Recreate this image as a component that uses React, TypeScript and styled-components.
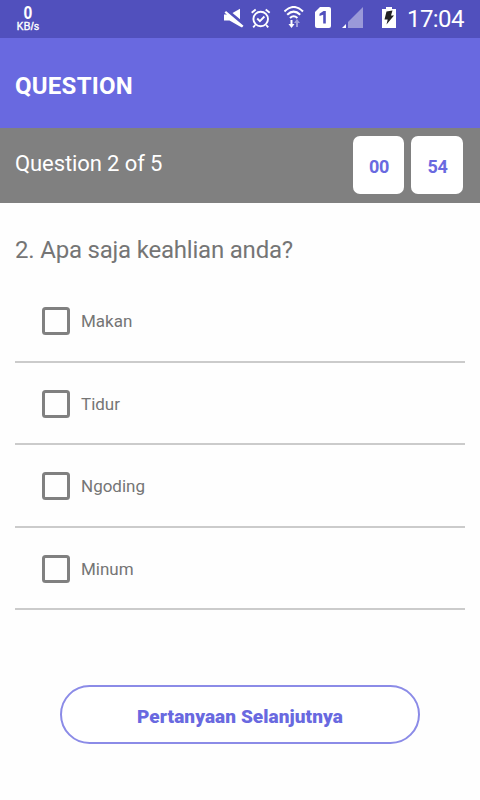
import React from "react";
import styled, { createGlobalStyle } from "styled-components";

const accent = "#6969e0";

const GlobalStyle = createGlobalStyle`
  *, *::before, *::after { box-sizing: border-box; }
  body { margin: 0; background: #fff; font-family: Roboto, sans-serif; }
`;

const Screen = styled.div`
  width: 480px;
  height: 800px;
  display: flex;
  flex-direction: column;
  background: #fefefe;
  overflow: hidden;
`;

const StatusBar = styled.header`
  height: 38px;
  flex: none;
  display: flex;
  align-items: flex-start;
  background: #5150bd;
  color: #fff;
`;

const NetSpeed = styled.div`
  width: 40px;
  margin: 4px auto 0 8px;
  display: flex;
  flex-direction: column;
  align-items: center;
`;

const NetValue = styled.div`
  font: 700 18px/18px "Liberation Sans", sans-serif;
  transform: scaleX(0.88);
`;

const NetUnit = styled.div`
  font: 400 10px/9px "Liberation Sans", sans-serif;
  letter-spacing: 0.4px;
  -webkit-text-stroke: 0.4px #fff;
`;

const StatusIcon = styled.svg<{ $gap: number }>`
  flex: none;
  margin: 6px ${(p) => p.$gap}px 0 0;
  fill: #fff;
`;

const Clock = styled.time`
  width: 73px;
  font-size: 24px;
  line-height: 28px;
  letter-spacing: -0.6px;
  margin-top: 5px;
`;

const TitleBar = styled.div`
  height: 90px;
  flex: none;
  display: flex;
  align-items: center;
  padding: 6px 15px 0;
  background: ${accent};
`;

const Title = styled.h1`
  margin: 0;
  color: #fff;
  font-size: 24px;
  line-height: 28px;
  font-weight: 700;
  letter-spacing: 0.25px;
`;

const ProgressBar = styled.section`
  height: 75px;
  flex: none;
  display: flex;
  align-items: flex-start;
  padding: 8px 17px 0 15px;
  background: #808080;
`;

const ProgressText = styled.div`
  margin: 14px auto 0 0;
  color: #fff;
  font-size: 22px;
  line-height: 28px;
  letter-spacing: -0.1px;
`;

const TimeBox = styled.div<{ $width: number }>`
  width: ${(p) => p.$width}px;
  height: 58px;
  margin-left: 7px;
  padding: 3px 0 0 1px;
  display: flex;
  align-items: center;
  justify-content: center;
  border-radius: 7px;
  background: #fff;
  color: ${accent};
  font-size: 18px;
  font-weight: 700;
  letter-spacing: -0.3px;
`;

const Main = styled.main`
  padding: 33px 15px 0;
  display: flex;
  flex-direction: column;
`;

const Prompt = styled.h2`
  margin: 0 0 14px;
  color: #757575;
  font-size: 24px;
  line-height: 28px;
  font-weight: 400;
  letter-spacing: -0.2px;
`;

const Options = styled.div`
  display: grid;
  grid-template-rows: 85px 82px 83px 82px;
`;

const Option = styled.label`
  display: flex;
  align-items: flex-end;
  padding: 0 0 26px 27px;
  border-bottom: 2px solid #cbcbcb;
  color: #757575;
  font-size: 17px;
  line-height: 28px;

  &:nth-child(even) {
    padding-bottom: 25px;
  }
`;

const Box = styled.input`
  appearance: none;
  width: 28px;
  height: 28px;
  margin: 0 11px 0 0;
  border: 3px solid #808080;
  border-radius: 3.5px;
`;

const NextButton = styled.button`
  align-self: center;
  width: 360px;
  height: 59px;
  margin-top: 75px;
  padding: 4px 0 0;
  border: 2px solid #8b8be7;
  border-radius: 30px;
  background: #fff;
  color: ${accent};
  font: 900 19px/24px Roboto, sans-serif;
  letter-spacing: 0.08px;
`;

const options = ["Makan", "Tidur", "Ngoding", "Minum"];

export default function App() {
  return (
    <Screen>
      <GlobalStyle />
      <StatusBar>
        <NetSpeed>
          <NetValue>0</NetValue>
          <NetUnit>KB/s</NetUnit>
        </NetSpeed>
        <StatusIcon $gap={7} width="20" height="22">
          <path d="M8.500 7 16 2.800v10.400z" />
          <path d="M0 8.500h3L.5 6.700 2 5 19.500 19.700 18 21.500 16 20.500 5.500 14.500H0z" />
        </StatusIcon>
        <StatusIcon $gap={13} width="20" height="22">
          <g fill="none" stroke="#fff" strokeWidth="1.9">
            <circle cx="9.700" cy="13" r="7.300" />
            <path d="m.7 6.700 4-3.300M18.700 6.700l-4-3.300M6.200 12.500l2.700 2.600 4.500-4.600M4.200 19l-2 2.300M15.200 19l2 2.300" />
          </g>
        </StatusIcon>
        <StatusIcon $gap={11} width="20" height="22">
          <g fill="none" stroke="#fff" strokeWidth="2.1">
            <path d="M.4 5.500q9.300-9 18.600 0M3.200 8.700q6.500-6 13 0M6 12q3.700-3.500 7.400 0" />
          </g>
          <path d="M6.500 14h2v4h2l-3 4-3-4h2z" />
          <path d="M12 21v-4h-2l3-4 3 4h-2v4z" opacity=".45" />
        </StatusIcon>
        <StatusIcon $gap={11} width="16" height="22">
          <path d="M5 1h9q2 0 2 2v17q0 2-2 2H2q-2 0-2-2V6z" />
          <path d="M4.500 7.700 8.500 5h2.300v12.500H8.200V8.700L4.500 10z" fill="#5150bd" />
        </StatusIcon>
        <StatusIcon $gap={19} width="21" height="22">
          <path d="M6 16 21 1v21H6z" opacity=".42" />
          <path d="m0 22 4-4v4z" />
        </StatusIcon>
        <StatusIcon $gap={11} width="14" height="22">
          <path d="M0 3h4V1h6v2h4v19H0z" />
          <path d="m4.500 5.500 6-1-1.500 5H12L4.500 18.500 5.700 13.500H2.500z" fill="#222" />
        </StatusIcon>
        <Clock>17:04</Clock>
      </StatusBar>
      <TitleBar>
        <Title>QUESTION</Title>
      </TitleBar>
      <ProgressBar>
        <ProgressText>Question 2 of 5</ProgressText>
        <TimeBox $width={51}>00</TimeBox>
        <TimeBox $width={52}>54</TimeBox>
      </ProgressBar>
      <Main>
        <Prompt>2. Apa saja keahlian anda?</Prompt>
        <Options>
          {options.map((label) => (
            <Option key={label}>
              <Box type="checkbox" />
              {label}
            </Option>
          ))}
        </Options>
        <NextButton type="button">Pertanyaan Selanjutnya</NextButton>
      </Main>
    </Screen>
  );
}
